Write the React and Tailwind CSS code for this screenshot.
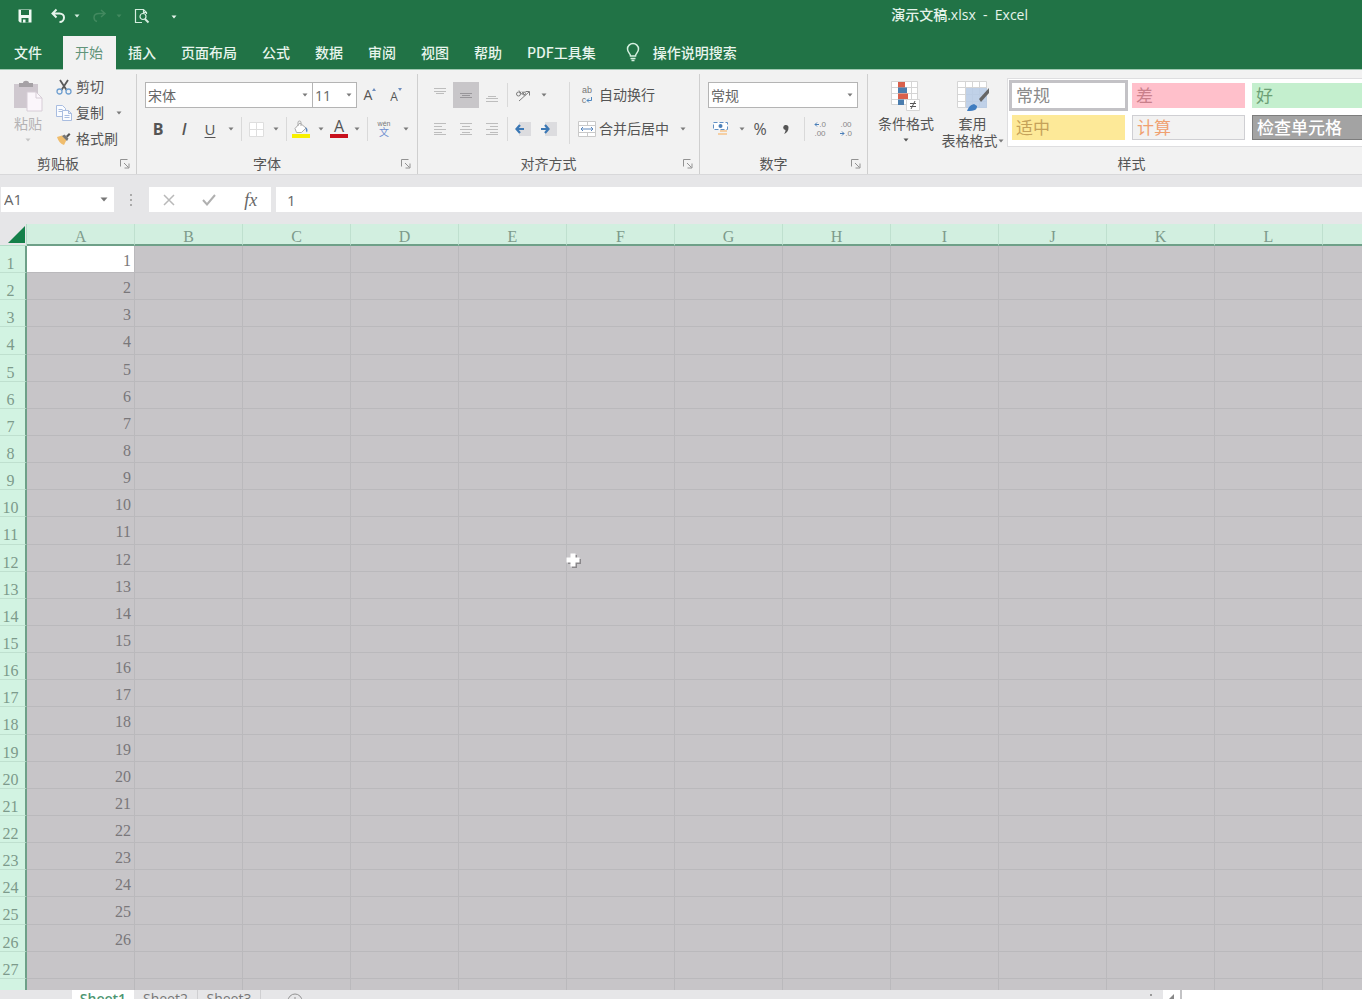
import { useState } from "react";

const TABS = ["文件", "开始", "插入", "页面布局", "公式", "数据", "审阅", "视图", "帮助", "PDF工具集"];
const COLUMNS = "ABCDEFGHIJKLM".split("");
const ROWS = Array.from({ length: 28 }, (_, i) => i + 1);

const STYLES = [
  { name: "常规", className: "bg-white text-[#8a8a8a] ring-3 ring-[#c3c2c6]" },
  { name: "差", className: "bg-[#ffc0cb] text-[#c9808b]" },
  { name: "好", className: "bg-[#c4efce] text-[#6c9f75]" },
  { name: "适中", className: "bg-[#fde998] text-[#c5a25a]" },
  { name: "计算", className: "border border-[#cfcfd3] bg-[#f2f2f2] text-[#f0a070]" },
  { name: "检查单元格", className: "border border-[#7d7d7d] bg-[#a3a3a3] font-medium text-white" },
];

function Caret({ className = "text-[#7a7a7a]" }) {
  return (
    <svg viewBox="0 0 6 4" className={`h-1 w-1.5 ${className}`} fill="currentColor">
      <path d="M0.5 0.5h5L3 3.5z" />
    </svg>
  );
}

function CaretButton({ label }) {
  return (
    <button aria-label={label} className="flex h-6 w-4 items-center justify-center">
      <Caret />
    </button>
  );
}

function IconButton({ label, className = "w-[26px]", children }) {
  return (
    <button aria-label={label} className={`flex h-[26px] shrink-0 items-center justify-center ${className}`}>
      {children}
    </button>
  );
}

function Divider({ className = "h-6" }) {
  return <span className={`mx-0.5 w-px shrink-0 bg-[#d9d9d9] ${className}`} />;
}

function Combo({ label, options, className }) {
  return (
    <div className={`relative h-[26px] border border-[#b4b4b4] bg-white ${className}`}>
      <select
        aria-label={label}
        className="h-full w-full appearance-none bg-transparent pr-4 pl-0.5 text-sm leading-none text-[#666] outline-none"
      >
        {options.map((option) => (
          <option key={option}>{option}</option>
        ))}
      </select>
      <span className="pointer-events-none absolute inset-y-0 right-1 flex items-center">
        <Caret />
      </span>
    </div>
  );
}

function Group({ title, launcher = true, className, children }) {
  return (
    <section className={`flex shrink-0 flex-col border-r border-[#cfcfcf] ${className}`}>
      <div className="flex h-20">{children}</div>
      <div className="flex h-5 items-center text-sm leading-5 text-[#555]">
        <span className="flex-1 text-center">{title}</span>
        {launcher && (
          <button aria-label={`${title}设置`} className="flex w-5 items-center pl-1">
            <svg viewBox="0 0 10 10" className="h-2.5 w-2.5" fill="none" stroke="#929292">
              <path d="M0.5 7.5v-7h7M4 4l4.5 4.5M9 4.5V9H4.5" />
            </svg>
          </button>
        )}
      </div>
    </section>
  );
}

// stacked text lines for the six alignment buttons
function LinesIcon({ d, stroke = "#bdbdbd" }) {
  return (
    <svg viewBox="0 0 14 16" className="h-4 w-3.5" fill="none" stroke={stroke}>
      <path d={d} />
    </svg>
  );
}

function TitleBar() {
  return (
    <header className="flex h-9 items-center pb-[5px] pl-[18px] text-white">
      <button aria-label="保存">
        <svg viewBox="0 0 14 14" className="h-3.5 w-3.5">
          <path d="M0.5 0.5h13v13H2L0.5 12z" fill="#f0faf4" />
          <path d="M3 1h8v5H3zM3.5 9h7v4.5h-7z" fill="#217346" />
          <path d="M5 10.5h2.5v3H5z" fill="#f0faf4" />
        </svg>
      </button>
      <button aria-label="撤消" className="ml-[18px]">
        <svg viewBox="0 0 16 16" className="h-4 w-4" fill="none" stroke="#e6f5ec" strokeWidth="2">
          <path d="M6.5 1.5L2.5 5.5l4 4M3 5.5h6.5c3 0 4.5 2 4.5 4s-1.5 4.5-4.5 4.5" />
        </svg>
      </button>
      <button aria-label="撤消列表" className="ml-2">
        <Caret className="text-[#d5eddf]" />
      </button>
      <button aria-label="恢复" className="ml-3">
        <svg viewBox="0 0 16 16" className="h-4 w-4" fill="none" stroke="#42895f" strokeWidth="1.5">
          <path d="M9 2l4 3.5-4 3.5M13 5.5H7C3.5 5.5 2 7.5 2 9.5S3.5 13 5 13.5" />
        </svg>
      </button>
      <button aria-label="恢复列表" className="ml-2">
        <Caret className="text-[#42895f]" />
      </button>
      <button aria-label="打印预览" className="ml-3">
        <svg viewBox="0 0 16 16" className="h-4 w-4" fill="none" stroke="#d5eddf" strokeWidth="1.2">
          <path d="M8 14.5H1.5v-13h8L12.5 4.5V6M9.5 1.5v3h3" />
          <circle cx="9" cy="8.5" r="3" />
          <path d="M11 11l3.5 3.5" strokeWidth="2" />
        </svg>
      </button>
      <button aria-label="自定义快速访问工具栏" className="mt-0.5 ml-[21px]">
        <Caret className="text-[#e6f5ec]" />
      </button>
      <h1 className="mr-[334px] ml-auto pb-0.5 text-sm leading-5 font-medium whitespace-pre text-[#e6f3eb]">
        演示文稿.xlsx{"  -  "}Excel
      </h1>
    </header>
  );
}

function TabBar({ active, onSelect }) {
  return (
    <nav className="flex h-[34px] items-stretch border-b border-[#9fc9b1] pl-0.5 font-['Noto_Sans_CJK_SC',sans-serif] text-sm whitespace-nowrap text-[#e8f5ed]">
      {TABS.map((tab, i) => (
        <button
          key={tab}
          onClick={() => onSelect(tab)}
          className={`pr-[13px] pb-0.5 pl-3 ${i === 0 ? "mr-2" : ""} ${
            tab === active ? "-mb-px bg-[#f2f2f2] font-normal text-[#62947a]" : "font-medium"
          }`}
        >
          {tab}
        </button>
      ))}
      <button className="ml-4 flex items-center gap-3 pb-0.5 font-medium">
        <svg viewBox="0 0 16 20" className="h-5 w-4" fill="none" stroke="#d5f0e0" strokeWidth="1.5">
          <path d="M5.5 14c0-2.5-3-3.5-3-7a5.5 5.5 0 0 1 11 0c0 3.5-3 4.5-3 7zM5.5 16.5h5M6.5 18.5h3" />
        </svg>
        操作说明搜索
      </button>
    </nav>
  );
}

function ClipboardGroup() {
  return (
    <Group title="剪贴板" className="w-[137px]">
      <button className="flex w-14 flex-col items-center pt-1.5 text-sm leading-5 text-[#b5b3b5]">
        <svg viewBox="0 0 30 32" className="mb-0.5 h-8 w-[30px]">
          <path d="M1 4h24v24H1z" fill="#cfc8cf" />
          <path d="M6 7V3h4c0-3 6-3 6 0h4v4z" fill="#a5a1a5" />
          <path d="M14 12h9l6 6v13H14z" fill="#fbf6fb" stroke="#d6cdd6" />
          <path d="M23 12v6h6" fill="none" stroke="#d6cdd6" />
        </svg>
        粘贴
        <Caret className="mt-1 text-[#c5c5c5]" />
      </button>
      <div className="text-sm leading-[26px] text-[#555]">
        <button className="flex items-center gap-1">
          <svg viewBox="0 0 16 16" className="h-4 w-4" fill="none">
            <path d="M4 1l6.5 10M12 1L5.5 11" stroke="#5a5a5a" strokeWidth="1.8" />
            <circle cx="3.5" cy="12.5" r="2.5" stroke="#6f9fd0" strokeWidth="1.3" />
            <circle cx="12.5" cy="12.5" r="2.5" stroke="#6f9fd0" strokeWidth="1.3" />
          </svg>
          剪切
        </button>
        <div className="flex items-center">
          <button className="flex items-center gap-1">
            <svg viewBox="0 0 16 16" className="h-4 w-4" fill="#fafcff" stroke="#a9bde0">
              <path d="M0.5 0.5h6l3 3v8h-9zM2.5 4.5h4M2.5 6.5h4" />
              <path d="M6.5 5.5h6l3 3v7h-9zM12.5 5.5v3h3M8.5 10.5h5M8.5 12.5h5" />
            </svg>
            复制
          </button>
          <span className="ml-[7px] flex items-center">
            <CaretButton label="复制选项" />
          </span>
        </div>
        <button className="flex items-center gap-1">
          <svg viewBox="0 0 16 16" className="h-4 w-4">
            <path d="M1 6l5-1.5L10.5 9 8 14C5 13 2 10 1 6z" fill="#f0bd6d" />
            <path d="M6 5l2.5-1.5 4 4L11 10z" fill="#777" />
            <path d="M10 5l3-3 1.5 1.5-3 3z" fill="#555" />
          </svg>
          格式刷
        </button>
      </div>
    </Group>
  );
}

function FontGroup() {
  return (
    <Group title="字体" className="w-[281px]">
      <div className="flex flex-col gap-2 pt-2 pl-2">
        <div className="flex items-center">
          <Combo label="字体" options={["宋体"]} className="w-[168px]" />
          <Combo label="字号" options={["11"]} className="-ml-px w-[45px]" />
          <IconButton label="增大字号">
            <span className="text-sm leading-5">A</span>
            <svg viewBox="0 0 4 3" className="mb-3 h-[3px] w-1" fill="#6f8fc0">
              <path d="M0 3l2-3 2 3z" />
            </svg>
          </IconButton>
          <IconButton label="减小字号">
            <span className="mt-1 text-xs leading-4">A</span>
            <svg viewBox="0 0 4 3" className="mb-3 h-[3px] w-1" fill="#6f8fc0">
              <path d="M0 0h4L2 3z" />
            </svg>
          </IconButton>
        </div>
        <div className="flex items-center text-base">
          <IconButton label="加粗">
            <span className="font-bold">B</span>
          </IconButton>
          <IconButton label="倾斜">
            <span className="font-semibold italic">I</span>
          </IconButton>
          <IconButton label="下划线">
            <span className="text-[15px] underline underline-offset-2">U</span>
          </IconButton>
          <CaretButton label="下划线样式" />
          <Divider />
          <IconButton label="边框" className="w-6">
            <svg viewBox="0 0 15 15" className="h-[15px] w-[15px]" fill="#fff" stroke="#dedede">
              <path d="M0.5 0.5h14v14h-14zM7.5 0.5v14M0.5 7.5h14" />
            </svg>
          </IconButton>
          <CaretButton label="边框样式" />
          <Divider />
          <IconButton label="填充颜色" className="w-6">
            <svg viewBox="0 0 18 18" className="h-[18px] w-[18px]">
              <path d="M3 8.5L8 3l6 5-4.5 4.5h-5z" fill="#fff" stroke="#aaa" />
              <path d="M6 6V2.5a1.5 1.5 0 0 1 3 0V6" fill="none" stroke="#aaa" />
              <path d="M13.5 7c2 1 2.5 3 1.5 5.5-1.5-1-1-3-1.5-5.5z" fill="#5b87bd" />
              <path d="M0 14h18v4H0z" fill="#f8f000" />
            </svg>
          </IconButton>
          <CaretButton label="填充颜色列表" />
          <IconButton label="字体颜色" className="w-5">
            <span className="h-[18px] w-[18px] border-b-4 border-[#c8101c] text-center text-base leading-3">A</span>
          </IconButton>
          <CaretButton label="字体颜色列表" />
          <Divider />
          <IconButton label="拼音指南" className="w-7 flex-col">
            <span className="font-['Liberation_Sans',sans-serif] text-[7px] leading-[7px] text-[#777]">wén</span>
            <span className="text-[10px] leading-[11px] text-[#6f8fd0]">文</span>
          </IconButton>
          <CaretButton label="拼音选项" />
        </div>
      </div>
    </Group>
  );
}

function AlignGroup() {
  return (
    <Group title="对齐方式" className="w-[282px]">
      <div className="flex w-[149px] flex-col gap-2 pt-2 pl-[9px]">
        <div className="flex items-center">
          <IconButton label="顶端对齐">
            <LinesIcon d="M1 1.5h12M1 4.5h12M3 6.5h8" />
          </IconButton>
          <IconButton label="垂直居中" className="w-[26px] bg-[#c8c6c9]">
            <LinesIcon d="M1 6.5h12M3 8.5h8M1 10.5h12" stroke="#98969a" />
          </IconButton>
          <IconButton label="底端对齐">
            <LinesIcon d="M3 9.5h8M1 11.5h12M1 14.5h12" />
          </IconButton>
          <Divider />
          <IconButton label="方向">
            <svg viewBox="0 0 16 16" className="h-4 w-4" fill="none" stroke="#7d7d7d">
              <path d="M4 14L14 5M10.5 4.5H14.5V8.5" />
              <circle cx="3.5" cy="7" r="2" />
              <path d="M4 3.5l3 4M7 4.5l3 4" />
              <circle cx="9" cy="6.5" r="1.5" />
            </svg>
          </IconButton>
          <CaretButton label="方向选项" />
        </div>
        <div className="flex items-center">
          <IconButton label="左对齐">
            <LinesIcon d="M1 2.5h12M1 5.5h8M1 8.5h12M1 11.5h8M1 13.5h12" />
          </IconButton>
          <IconButton label="居中">
            <LinesIcon d="M1 2.5h12M3 5.5h8M1 8.5h12M3 11.5h8M1 13.5h12" />
          </IconButton>
          <IconButton label="右对齐">
            <LinesIcon d="M1 2.5h12M5 5.5h8M1 8.5h12M5 11.5h8M1 13.5h12" />
          </IconButton>
          <Divider />
          <IconButton label="减少缩进量">
            <svg viewBox="0 0 16 14" className="h-3.5 w-4">
              <path d="M4 0h12v14H4z" fill="#dcdcdf" />
              <path d="M9 7H1.5M5 3L1.5 7 5 11" fill="none" stroke="#3b78b5" strokeWidth="2.2" />
            </svg>
          </IconButton>
          <IconButton label="增加缩进量">
            <svg viewBox="0 0 16 14" className="h-3.5 w-4">
              <path d="M4 0h12v14H4z" fill="#dcdcdf" />
              <path d="M0 7h7.5M4 3l3.5 4L4 11" fill="none" stroke="#3b78b5" strokeWidth="2.2" />
            </svg>
          </IconButton>
        </div>
      </div>
      <Divider className="mt-2 h-[62px]" />
      <div className="flex flex-col gap-2 pt-2 pl-1.5 text-sm text-[#555]">
        <button className="flex h-[26px] items-center gap-[3px]">
          <span className="flex w-[18px] flex-col items-center font-['Liberation_Sans',sans-serif] text-[9px] leading-[10px] text-[#777]">
            ab
            <span className="flex items-center">
              c
              <svg viewBox="0 0 6 6" className="h-1.5 w-1.5" fill="none" stroke="#4d86c0">
                <path d="M5.5 0v3.5H1M3 1.5l-2 2 2 2" />
              </svg>
            </span>
          </span>
          自动换行
        </button>
        <div className="flex items-center">
          <button className="flex h-[26px] items-center gap-[3px]">
            <svg viewBox="0 0 18 18" className="h-[18px] w-[18px]" fill="none">
              <path d="M0.5 1.5h17v15h-17zM0.5 5.5h17M0.5 12.5h17M9.5 1.5v4M9.5 12.5v4" fill="#fff" stroke="#c9c9c9" />
              <path d="M3 9h12M5 7L3 9l2 2M13 7l2 2-2 2" stroke="#5b87bd" />
            </svg>
            合并后居中
          </button>
          <span className="ml-1.5">
            <CaretButton label="合并选项" />
          </span>
        </div>
      </div>
    </Group>
  );
}

function NumberGroup() {
  return (
    <Group title="数字" className="w-[168px]">
      <div className="flex flex-col gap-2 pt-2 pl-2">
        <Combo label="数字格式" options={["常规"]} className="w-[150px]" />
        <div className="flex items-center">
          <IconButton label="会计数字格式">
            <svg viewBox="0 0 16 16" className="h-4 w-4">
              <path d="M0.5 1.5h14v7h-14z" fill="#fff" stroke="#5f8fc4" strokeDasharray="4 2" />
              <circle cx="7.5" cy="5" r="2" fill="#4b7fb8" />
              <path d="M7 9h7v2H7zM5 12h9v2H5z" fill="#f5cfa4" />
            </svg>
          </IconButton>
          <CaretButton label="会计格式列表" />
          <IconButton label="百分比样式" className="w-5">
            <span className="text-base leading-5">%</span>
          </IconButton>
          <IconButton label="千位分隔样式" className="w-8">
            <svg viewBox="0 0 6 9" className="h-[9px] w-1.5" fill="#555">
              <path d="M3 0a2.5 2.5 0 0 1 2.5 2.5C5.5 5.5 4 8 1 9c1-1.5 1.5-2.5 1.5-4A2.5 2.5 0 0 1 3 0z" />
            </svg>
          </IconButton>
          <Divider />
          <IconButton
            label="增加小数位数"
            className="w-[26px] flex-col font-['Liberation_Sans',sans-serif] text-[8px] leading-[9px] text-[#888]"
          >
            <span className="flex items-center">
              <svg viewBox="0 0 5 5" className="h-[5px] w-[5px]" fill="none" stroke="#4b7fb8">
                <path d="M5 2.5H1M3 0.5l-2 2 2 2" />
              </svg>
              .0
            </span>
            <span>.00</span>
          </IconButton>
          <IconButton
            label="减少小数位数"
            className="w-[26px] flex-col font-['Liberation_Sans',sans-serif] text-[8px] leading-[9px] text-[#888]"
          >
            <span>.00</span>
            <span className="flex items-center">
              <svg viewBox="0 0 5 5" className="h-[5px] w-[5px]" fill="none" stroke="#4b7fb8">
                <path d="M0 2.5h4M2 0.5l2 2-2 2" />
              </svg>
              .0
            </span>
          </IconButton>
        </div>
      </div>
    </Group>
  );
}

function StylesGroup() {
  const [current, setCurrent] = useState("常规");

  return (
    <Group title="样式" launcher={false} className="w-[528px]">
      <button className="ml-1.5 flex w-16 flex-col items-center pt-[7px] text-sm leading-[17px] whitespace-nowrap text-[#555]">
        <svg viewBox="0 0 30 30" className="mb-1 h-[30px] w-[30px]">
          <path d="M0.5 0.5h26v23h-26zM0.5 6.5h26M0.5 12.5h26M0.5 18.5h26M20.5 0.5v23" fill="#fff" stroke="#d5d5d5" />
          <path d="M7 1h7v5.5H7zM7 12.5h10v5.5H7z" fill="#d9604c" />
          <path d="M7 6.5h9V12H7zM7 18.5h6V24H7z" fill="#4a7dae" />
          <path d="M15.5 18.5h13v11h-13z" fill="#fff" stroke="#d5d5d5" />
          <path d="M19 22.5h6M19 25.5h6M24 20l-4 8" stroke="#555" />
        </svg>
        条件格式
        <Caret className="mt-1.5" />
      </button>
      <button className="flex w-[69px] flex-col items-center pt-[7px] text-sm leading-[17px] whitespace-nowrap text-[#555]">
        <svg viewBox="0 0 32 30" className="mb-1 h-[30px] w-8">
          <path d="M0.5 0.5h29v26h-29zM0.5 6.5h29M0.5 13.5h29M0.5 20.5h29M8.5 0.5v26M15.5 0.5v26M22.5 0.5v26" fill="#fff" stroke="#d5d5d5" />
          <path d="M9 7h21v20H9z" fill="#b9cce6" opacity="0.9" />
          <path d="M32 7L22 18l2 3 8-9z" fill="#666" />
          <path d="M10 30c2-5 4-6 7-7l3 2c0 3-1 5-10 5z" fill="#3f7cc0" />
        </svg>
        套用
        <span className="flex items-center">
          表格格式
          <Caret />
        </span>
      </button>
      <div className="mt-1 grid h-[69px] auto-rows-[25px] grid-cols-[113px_113px_113px] gap-[7px] border border-[#dedee0] bg-white px-1 pt-1">
        {STYLES.map((style) => (
          <button
            key={style.name}
            onClick={() => setCurrent(style.name)}
            aria-pressed={style.name === current}
            className={`pl-1 text-left text-[17px] leading-[22px] ${style.className}`}
          >
            {style.name}
          </button>
        ))}
      </div>
    </Group>
  );
}

function FormulaBar() {
  return (
    <div className="flex h-[50px] shrink-0 items-center border-t border-[#d8d8da] bg-[#e6e6e8] text-[15px] text-[#666]">
      <div className="ml-px flex h-[25px] w-[113px] items-center bg-white">
        <input aria-label="名称框" defaultValue="A1" className="w-full min-w-0 flex-1 pl-[3px] outline-none" />
        <button aria-label="名称列表" className="pr-1.5">
          <svg viewBox="0 0 8 5" className="h-[5px] w-2" fill="#777">
            <path d="M0.5 0.5h7L4 4.5z" />
          </svg>
        </button>
      </div>
      <svg viewBox="0 0 3 14" className="mx-4 h-3.5 w-[3px]" fill="#aaa">
        <path d="M0 1h2v2H0zM0 6h2v2H0zM0 11h2v2H0z" />
      </svg>
      <div className="flex h-[25px] w-[122px] items-center justify-around bg-white">
        <button aria-label="取消">
          <svg viewBox="0 0 12 12" className="h-3 w-3" stroke="#b9b9b9" strokeWidth="1.5">
            <path d="M1 1l10 10M11 1L1 11" />
          </svg>
        </button>
        <button aria-label="输入">
          <svg viewBox="0 0 14 12" className="h-3 w-3.5" fill="none" stroke="#b0b0b0" strokeWidth="2">
            <path d="M1 6l4 4.5L13 1" />
          </svg>
        </button>
        <button aria-label="插入函数" className="font-['Liberation_Serif',serif] text-lg leading-6 italic">
          fx
        </button>
      </div>
      <input aria-label="编辑栏" defaultValue="1" className="ml-[5px] h-[25px] min-w-0 flex-1 bg-white pl-[11px] outline-none" />
    </div>
  );
}

function Grid() {
  return (
    <main className="relative min-h-0 flex-1 overflow-hidden bg-[#c7c5c8]">
      <table className="h-[782px] w-[1431px] table-fixed border-separate border-spacing-0 font-['Liberation_Serif','Noto_Sans_CJK_SC',serif] text-base leading-5">
        <thead>
          <tr className="h-[22px]">
            <th className="w-[27px] border-r border-b border-[#b4dcc8] bg-[#e6e6e8] p-0">
              <svg viewBox="0 0 17 17" className="ml-2 h-[17px] w-[17px]" fill="#15804a">
                <path d="M17 0v17H0z" />
              </svg>
            </th>
            {COLUMNS.map((column) => (
              <th
                key={column}
                scope="col"
                className="border-r border-b-2 border-r-[#bfe0cf] border-b-[#6ea088] bg-[#d2efe0] p-0 pt-1.5 leading-[14px] font-normal text-[#7d9a8b]"
              >
                {column}
              </th>
            ))}
          </tr>
        </thead>
        <tbody>
          {ROWS.map((row) => (
            <tr key={row} className="h-[27px]">
              <th
                scope="row"
                className="border-r-2 border-b border-r-[#6ea088] border-b-[#bfe0cf] bg-[#d2f3e2] p-0 pt-2.5 pr-1 text-center leading-4 font-normal text-[#7d9a8b]"
              >
                {row <= 27 ? row : null}
              </th>
              {COLUMNS.map((column, i) => (
                <td
                  key={column}
                  className={`border-r border-b border-[#bab9bc] p-0 pt-1 pr-[3px] text-right text-[#79777a] ${
                    row === 1 && i === 0 ? "bg-white" : ""
                  }`}
                >
                  {i === 0 && row <= 26 ? row : null}
                </td>
              ))}
            </tr>
          ))}
        </tbody>
      </table>
      <svg viewBox="0 0 18 18" className="absolute top-[328px] left-[565px] h-[18px] w-[18px]">
        <path d="M7 3h5v4h4v5h-4v4H7v-4H3V7h4z" fill="#8a888b" />
        <path d="M5.5 1.5h5v4h4v5h-4v4h-5v-4h-4v-5h4z" fill="#fff" />
      </svg>
    </main>
  );
}

function SheetBar() {
  return (
    <footer className="flex h-[9px] shrink-0 items-start overflow-hidden bg-[#e6e6e8] pl-[72px] text-sm leading-[18px] text-[#777]">
      <button className="w-[62px] bg-white font-semibold text-[#4d9672]">Sheet1</button>
      <button className="w-16 border-r border-[#cfcfd1]">Sheet2</button>
      <button className="w-[63px] border-r border-[#cfcfd1]">Sheet3</button>
      <button aria-label="新工作表" className="mt-[3px] ml-[26px]">
        <svg viewBox="0 0 16 16" className="h-4 w-4" fill="none" stroke="#929292">
          <circle cx="8" cy="8" r="7" />
          <path d="M8 4v8M4 8h8" />
        </svg>
      </button>
      <div className="ml-auto flex">
        <svg viewBox="0 0 2 12" className="mt-1 mr-[11px] h-3 w-0.5" fill="#999">
          <path d="M0 0h2v2H0zM0 5h2v2H0z" />
        </svg>
        <button aria-label="向左滚动" className="flex h-4 w-[19px] justify-center border-r-2 border-[#c3c3c5] bg-white pt-1">
          <svg viewBox="0 0 6 10" className="h-2.5 w-1.5" fill="#888">
            <path d="M5 0v10L0 5z" />
          </svg>
        </button>
        <div className="h-4 w-[180px] bg-white" />
      </div>
    </footer>
  );
}

function App() {
  const [activeTab, setActiveTab] = useState("开始");

  return (
    <div className="flex h-screen flex-col overflow-hidden bg-[#e6e6e8] font-['Open_Sans','Noto_Sans_CJK_SC',sans-serif] text-[#555]">
      <div className="shrink-0 bg-[#217346]">
        <TitleBar />
        <TabBar active={activeTab} onSelect={setActiveTab} />
      </div>
      <div className="flex shrink-0 overflow-hidden bg-[#f2f2f2] pt-1">
        <ClipboardGroup />
        <FontGroup />
        <AlignGroup />
        <NumberGroup />
        <StylesGroup />
      </div>
      <FormulaBar />
      <Grid />
      <SheetBar />
    </div>
  );
}

export default App;
